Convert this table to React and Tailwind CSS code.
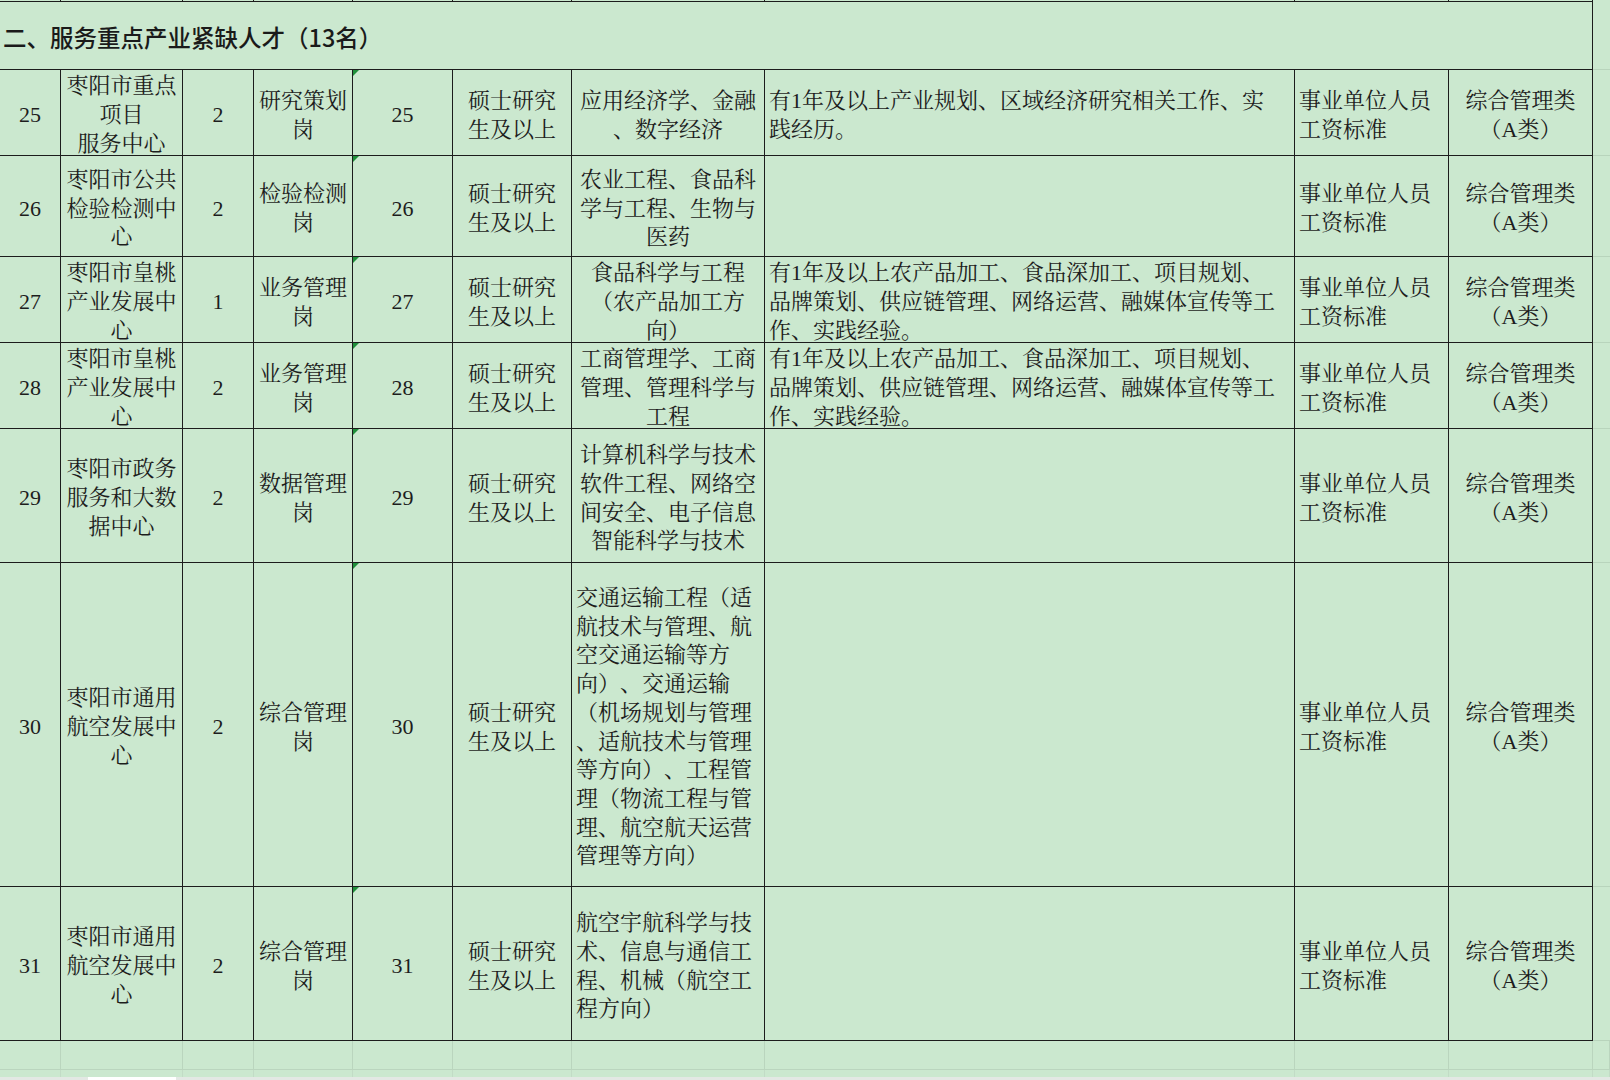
import React from "react";

const GRID =
  "grid grid-cols-[61px_122px_71px_99px_100px_119px_193px_530px_154px_144px_17px]";

const rows = [
  {
    n: "25",
    h: "h-[86px]",
    unit: ["枣阳市重点", "项目", "服务中心"],
    cnt: "2",
    post: ["研究策划", "岗"],
    major: ["应用经济学、金融", "、数字经济"],
    majorLeft: false,
    req: ["有1年及以上产业规划、区域经济研究相关工作、实", "践经历。"],
  },
  {
    n: "26",
    h: "h-[101px]",
    unit: ["枣阳市公共", "检验检测中", "心"],
    cnt: "2",
    post: ["检验检测", "岗"],
    major: ["农业工程、食品科", "学与工程、生物与", "医药"],
    majorLeft: false,
    req: [],
  },
  {
    n: "27",
    h: "h-[86px]",
    unit: ["枣阳市皇桃", "产业发展中", "心"],
    cnt: "1",
    post: ["业务管理", "岗"],
    major: ["食品科学与工程", "（农产品加工方", "向）"],
    majorLeft: false,
    req: [
      "有1年及以上农产品加工、食品深加工、项目规划、",
      "品牌策划、供应链管理、网络运营、融媒体宣传等工",
      "作、实践经验。",
    ],
  },
  {
    n: "28",
    h: "h-[86px]",
    unit: ["枣阳市皇桃", "产业发展中", "心"],
    cnt: "2",
    post: ["业务管理", "岗"],
    major: ["工商管理学、工商", "管理、管理科学与", "工程"],
    majorLeft: false,
    req: [
      "有1年及以上农产品加工、食品深加工、项目规划、",
      "品牌策划、供应链管理、网络运营、融媒体宣传等工",
      "作、实践经验。",
    ],
  },
  {
    n: "29",
    h: "h-[134px]",
    unit: ["枣阳市政务", "服务和大数", "据中心"],
    cnt: "2",
    post: ["数据管理", "岗"],
    major: ["计算机科学与技术", "软件工程、网络空", "间安全、电子信息", "智能科学与技术"],
    majorLeft: false,
    req: [],
  },
  {
    n: "30",
    h: "h-[324px]",
    unit: ["枣阳市通用", "航空发展中", "心"],
    cnt: "2",
    post: ["综合管理", "岗"],
    major: [
      "交通运输工程（适",
      "航技术与管理、航",
      "空交通运输等方",
      "向）、交通运输",
      "（机场规划与管理",
      "、适航技术与管理",
      "等方向）、工程管",
      "理（物流工程与管",
      "理、航空航天运营",
      "管理等方向）",
    ],
    majorLeft: true,
    req: [],
  },
  {
    n: "31",
    h: "h-[154px]",
    unit: ["枣阳市通用", "航空发展中", "心"],
    cnt: "2",
    post: ["综合管理", "岗"],
    major: ["航空宇航科学与技", "术、信息与通信工", "程、机械（航空工", "程方向）"],
    majorLeft: true,
    req: [],
  },
];

function Lines({ lines }) {
  return lines.map((l, i) => (
    <span key={i} className="block whitespace-nowrap">
      {l}
    </span>
  ));
}

function Cell({ lines = [], left = false, tri = false }) {
  return (
    <div
      className={
        "relative min-h-0 flex items-center border-r border-b border-[#1c1c1c] " +
        (left ? "justify-start pl-[4px] text-left" : "justify-center text-center")
      }
    >
      {tri && (
        <div className="absolute left-0 top-0 h-0 w-0 border-t-[6px] border-r-[6px] border-t-[#1f8f3a] border-r-transparent" />
      )}
      <div className="translate-y-[3px]">
        <Lines lines={lines} />
      </div>
    </div>
  );
}

function Faint() {
  return <div className="border-b border-[#b8d4bc]" />;
}

export default function App() {
  return (
    <div
      className="w-[1610px] h-[1080px] overflow-hidden bg-[#cbe8cf] text-[#1d1d1d] text-[22px] leading-[28.7px] flex flex-col [text-spacing-trim:space-all]"
      style={{ fontFamily: '"Liberation Serif", "Noto Serif CJK SC", "Noto Sans CJK SC", serif' }}
    >
      {/* previous row sliver */}
      <div className={GRID + " h-[2px] shrink-0"}>
        {Array.from({ length: 10 }).map((_, i) => (
          <div key={i} className="border-r border-b border-[#1c1c1c]" />
        ))}
        <div />
      </div>

      {/* title row */}
      <div className="flex h-[68px] shrink-0">
        <div
          className="w-[1593px] flex items-center pl-[3px] border-r border-b border-[#1c1c1c] text-[23.5px] font-medium text-[#1a1a1a]"
          style={{ fontFamily: '"Noto Sans CJK SC", sans-serif' }}
        >
          <span className="translate-y-[2px]">二、服务重点产业紧缺人才（13名）</span>
        </div>
        <div className="flex-1 border-b border-[#b8d4bc]" />
      </div>

      {rows.map((r) => (
        <div key={r.n} className={GRID + " shrink-0 overflow-visible " + r.h}>
          <Cell lines={[r.n]} />
          <Cell lines={r.unit} />
          <Cell lines={[r.cnt]} />
          <Cell lines={r.post} />
          <Cell lines={[r.n]} tri />
          <Cell lines={["硕士研究", "生及以上"]} />
          <Cell lines={r.major} left={r.majorLeft} />
          <Cell lines={r.req} left />
          <Cell lines={["事业单位人员", "工资标准"]} left />
          <Cell lines={["综合管理类", "（A类）"]} />
          <Faint />
        </div>
      ))}

      {/* empty row below table */}
      <div className={GRID + " h-[29px] shrink-0"}>
        {Array.from({ length: 11 }).map((_, i) => (
          <div key={i} className="border-r border-b border-[#bad5be]" />
        ))}
      </div>
      <div className={GRID + " h-[7px] shrink-0"}>
        {Array.from({ length: 11 }).map((_, i) => (
          <div key={i} className="border-r border-[#c2dcc6]" />
        ))}
      </div>

      {/* sheet tab strip */}
      <div className="flex-1 bg-[#e3e8e4] flex">
        <div className="w-[88px]" />
        <div className="w-[88px] bg-white" />
      </div>
    </div>
  );
}
